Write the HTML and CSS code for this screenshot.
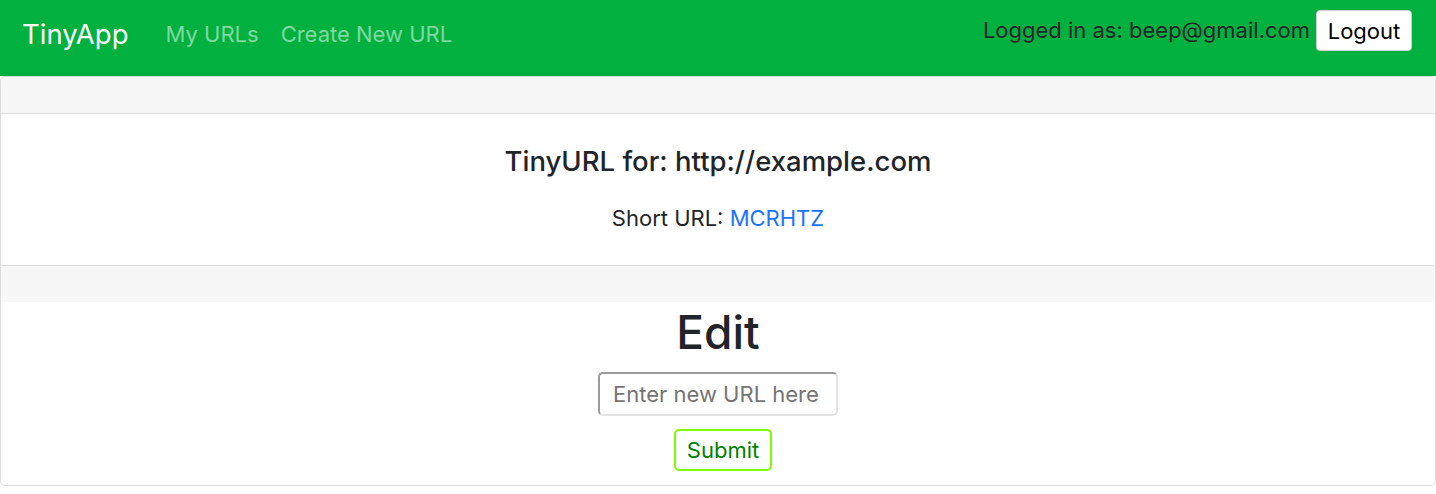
FILE: index.html
```html
<!DOCTYPE html>
<html lang="en">
<head>
<meta charset="utf-8">
<title>TinyApp</title>
<link rel="stylesheet" href="styles.css">
</head>
<body>
<nav class="navbar">
  <a class="brand" href="#">TinyApp</a>
  <div class="nav-links">
    <a class="nav-link" href="#">My URLs</a>
    <a class="nav-link" href="#">Create New URL</a>
  </div>
  <form class="user-box">
    <span class="user-text">Logged in as: beep@gmail.com</span>
    <button class="logout" type="button">Logout</button>
  </form>
</nav>
<main class="card">
  <div class="card-header"></div>
  <div class="card-body">
    <h5 class="card-title">TinyURL for: http://example.com</h5>
    <p class="card-text">Short URL: <a class="short-link" href="#">MCRHTZ</a></p>
  </div>
  <div class="card-footer"></div>
  <form class="edit-form">
    <h1 class="edit-title">Edit</h1>
    <input class="url-input" type="text" placeholder="Enter new URL here">
    <button class="submit" type="button">Submit</button>
  </form>
</main>
</body>
</html>
```
FILE: styles.css
```css
* { box-sizing: border-box; }
html, body { margin: 0; padding: 0; }
body {
  font-family: "Inter", "Noto Sans", "Liberation Sans", sans-serif;
  font-size: 22px;
  color: #212529;
  background: #fff;
}
a { text-decoration: none; }

.navbar {
  height: 76px;
  background: #00b140;
  display: flex;
  align-items: flex-start;
  padding: 0 24px 0 22px;
}
.brand {
  color: #fff;
  font-size: 27.5px;
  line-height: 33px;
  margin-right: 26px;
  margin-top: 18px;
}
.nav-links { display: flex; margin-top: 18px; }
.nav-link {
  color: rgba(255, 255, 255, 0.5);
  padding: 0 11px;
  line-height: 33px;
}
.user-box {
  margin-left: auto;
  margin-top: 10px;
  display: flex;
  align-items: center;
  gap: 6px;
}
.user-text { color: #212529; line-height: 33px; }
.logout {
  font: inherit;
  color: #000;
  background: #fff;
  border: 1px solid #cfcfcf;
  border-radius: 4px;
  width: 96px;
  height: 41px;
  padding: 0;
}

.card {
  border: 1px solid #dcdcdc;
  border-radius: 5px;
  background: #fff;
  height: 410px;
  overflow: hidden;
}
.card-header {
  height: 37px;
  background: #f7f7f7;
  border-bottom: 1px solid #dcdcdc;
}
.card-body {
  text-align: center;
  padding: 31px 0 0;
  height: 151px;
}
.card-title {
  margin: 0 0 24px;
  font-size: 27.5px;
  line-height: 33px;
  font-weight: 500;
}
.card-text { margin: 0; line-height: 33px; }
.short-link { color: #1a73ff; }
.card-footer {
  height: 37px;
  background: #f7f7f7;
  border-top: 1px solid #dcdcdc;
}
.edit-form {
  display: flex;
  flex-direction: column;
  align-items: center;
}
.edit-title {
  margin: 3px 0 12px;
  font-size: 46px;
  line-height: 55px;
  font-weight: 500;
}
.url-input {
  width: 240px;
  height: 44px;
  font: inherit;
  padding: 0 0 0 13px;
  border-style: solid;
  border-width: 2px;
  border-color: #9a9a9a #e4e4e4 #e4e4e4 #9a9a9a;
  border-radius: 5px;
  margin-bottom: 13px;
  outline: none;
}
.url-input::placeholder { color: #757575; }
.submit {
  font: inherit;
  color: #008000;
  background: #fff;
  border: 2px solid #7cfc00;
  border-radius: 5px;
  width: 98px;
  height: 42px;
  padding: 0;
  margin-left: 10px;
}
```
